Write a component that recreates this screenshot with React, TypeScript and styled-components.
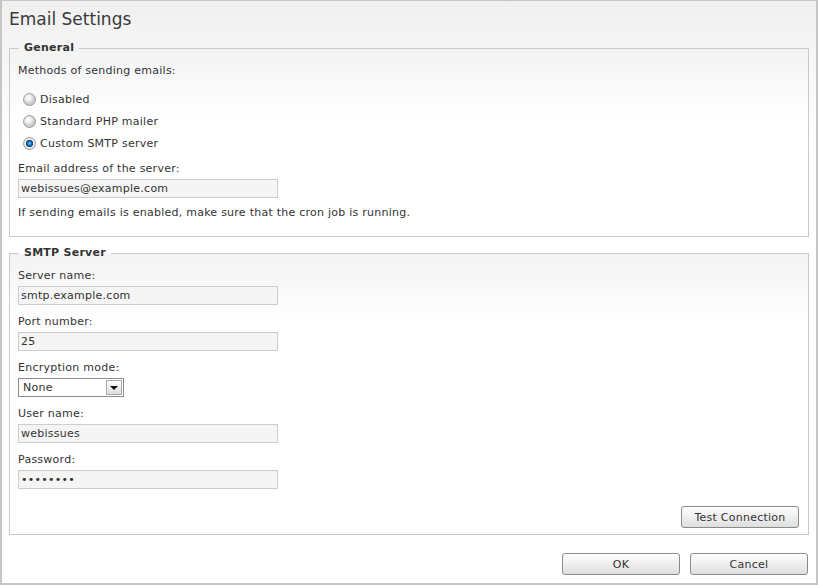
import React from "react";
import styled, { createGlobalStyle } from "styled-components";

const GlobalStyle = createGlobalStyle`
  body {
    margin: 0;
    font-family: "DejaVu Sans", Verdana, sans-serif;
    font-size: 11px;
    letter-spacing: 0.25px;
    color: #333;
  }
`;

const Page = styled.div`
  box-sizing: border-box;
  width: 818px;
  height: 585px;
  border: 2px solid #c6c6c6;
  border-top-width: 1px;
  background: linear-gradient(#f0f0f0, #ffffff 150px);
  padding: 7px 7px 0;
  display: flex;
  flex-direction: column;
`;

const Title = styled.h1`
  margin: 0;
  font-size: 17px;
  font-weight: normal;
  line-height: 22px;
  letter-spacing: 0;
  color: #3a3a3a;
`;

const Group = styled.fieldset<{ $top: number; $bottom: number }>`
  margin: ${(p) => p.$top}px 0 0;
  padding: 9px 9px ${(p) => p.$bottom}px 8px;
  border: 1px solid #c9c9c9;
  background: linear-gradient(#f3f3f3, #ffffff 70px);
  min-width: 0;
  display: flex;
  flex-direction: column;
`;

const Legend = styled.legend`
  margin-left: 1px;
  padding: 0 5px;
  font-weight: bold;
  line-height: 14px;
  color: #333;
`;

const Text = styled.div<{ $top?: number }>`
  line-height: 14px;
  margin-top: ${(p) => p.$top ?? 0}px;
`;

const RadioList = styled.div`
  margin: 10px 0 0 5px;
  display: flex;
  flex-direction: column;
`;

const RadioRow = styled.label`
  display: flex;
  align-items: center;
  gap: 4px;
  height: 22px;
`;

const RadioDot = styled.span<{ $checked?: boolean }>`
  box-sizing: border-box;
  width: 13px;
  height: 13px;
  border-radius: 50%;
  border: 1px solid #9a9a9a;
  background: ${(p) =>
    p.$checked
      ? "radial-gradient(circle at 50% 50%, #7cc4f4 0, #1b6fb5 2px, #0b3f78 3.5px, #f4f4f4 3.8px, #dcdcdc 6px)"
      : "radial-gradient(circle at 40% 35%, #ffffff 0, #ececec 3px, #c9c9c9 6px)"};
`;

const Field = styled.div<{ $top: number }>`
  margin-top: ${(p) => p.$top}px;
  display: flex;
  flex-direction: column;
  align-items: flex-start;
`;

const FieldLabel = styled.label`
  line-height: 14px;
  margin-bottom: 3px;
`;

const Input = styled.input`
  box-sizing: border-box;
  width: 260px;
  height: 19px;
  margin: 0;
  padding: 0 2px;
  border: 1px solid #cdcdcd;
  background: #f5f5f5;
  font-family: inherit;
  font-size: 11px;
  letter-spacing: 0.25px;
  color: #333;
  outline: none;
`;

const SelectBox = styled.div`
  box-sizing: border-box;
  width: 106px;
  height: 19px;
  border: 1px solid #8c8c8c;
  background: #fff;
  display: flex;
  align-items: center;
  justify-content: space-between;
  padding: 1px 1px 1px 4px;
`;

const SelectValue = styled.span`
  line-height: 14px;
`;

const ArrowButton = styled.span`
  box-sizing: border-box;
  width: 16px;
  height: 15px;
  border: 1px solid #a8a8a8;
  background: linear-gradient(#ffffff, #dcdcdc);
  display: flex;
  align-items: center;
  justify-content: center;
`;

const Arrow = styled.span`
  width: 0;
  height: 0;
  border-left: 4px solid transparent;
  border-right: 4px solid transparent;
  border-top: 4px solid #111;
  margin-top: 1px;
`;

const ButtonRow = styled.div<{ $top: number }>`
  margin-top: ${(p) => p.$top}px;
  display: flex;
  justify-content: flex-end;
  gap: 10px;
`;

const Button = styled.button`
  box-sizing: border-box;
  width: 118px;
  height: 22px;
  margin: 0;
  padding: 0;
  border: 1px solid #8a8a8a;
  border-radius: 3px;
  background: linear-gradient(#fdfdfd, #f1f1f1 45%, #dedede);
  box-shadow: inset 0 1px 0 #ffffff;
  font-family: inherit;
  font-size: 11px;
  letter-spacing: 0.25px;
  color: #333;
`;

const Footer = styled(ButtonRow)`
  padding-right: 1px;
`;

const Radio = ({ label, checked }: { label: string; checked?: boolean }) => (
  <RadioRow>
    <RadioDot $checked={checked} />
    {label}
  </RadioRow>
);

const TextField = ({
  label,
  value,
  top,
  type = "text",
}: {
  label: string;
  value: string;
  top: number;
  type?: string;
}) => (
  <Field $top={top}>
    <FieldLabel>{label}</FieldLabel>
    <Input type={type} defaultValue={value} />
  </Field>
);

export default function App() {
  return (
    <Page>
      <GlobalStyle />
      <Title>Email Settings</Title>
      <Group $top={11} $bottom={16}>
        <Legend>General</Legend>
        <Text>Methods of sending emails:</Text>
        <RadioList>
          <Radio label="Disabled" />
          <Radio label="Standard PHP mailer" />
          <Radio label="Custom SMTP server" checked />
        </RadioList>
        <TextField
          top={8}
          label="Email address of the server:"
          value="webissues@example.com"
        />
        <Text $top={8}>
          If sending emails is enabled, make sure that the cron job is running.
        </Text>
      </Group>
      <Group $top={9} $bottom={6}>
        <Legend>SMTP Server</Legend>
        <TextField top={0} label="Server name:" value="smtp.example.com" />
        <TextField top={10} label="Port number:" value="25" />
        <Field $top={10}>
          <FieldLabel>Encryption mode:</FieldLabel>
          <SelectBox>
            <SelectValue>None</SelectValue>
            <ArrowButton>
              <Arrow />
            </ArrowButton>
          </SelectBox>
        </Field>
        <TextField top={10} label="User name:" value="webissues" />
        <TextField top={10} label="Password:" value="password" type="password" />
        <ButtonRow $top={17}>
          <Button>Test Connection</Button>
        </ButtonRow>
      </Group>
      <Footer $top={18}>
        <Button>OK</Button>
        <Button>Cancel</Button>
      </Footer>
    </Page>
  );
}
